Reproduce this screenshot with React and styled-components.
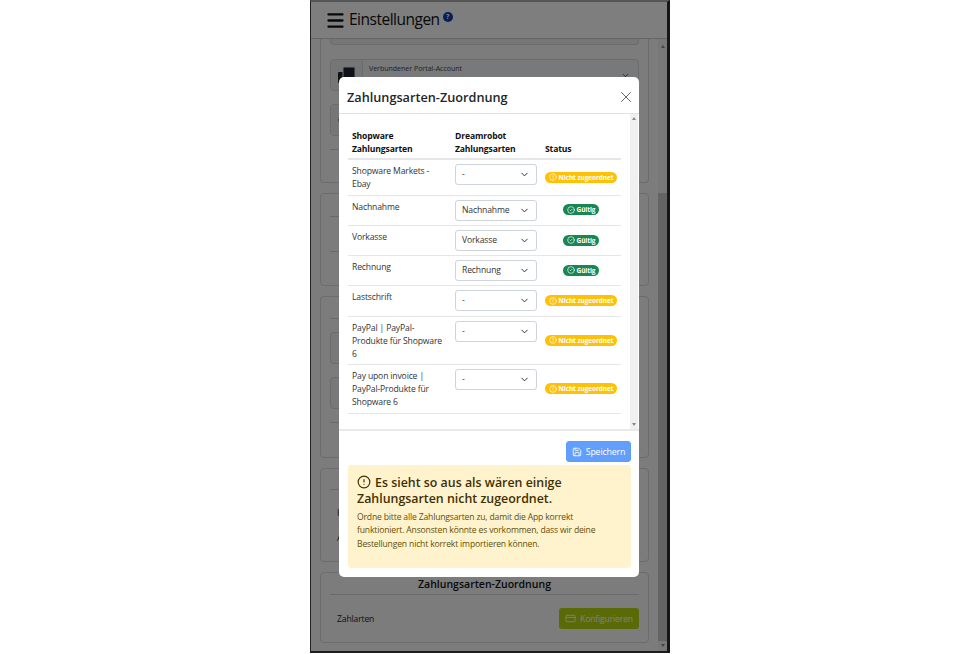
import React from 'react';
import styled, { createGlobalStyle } from 'styled-components';
import { ChevronDown, X, Menu, CircleAlert, CircleCheck, CreditCard, Save } from 'lucide-react';

const Global = createGlobalStyle`
  html, body { margin: 0; padding: 0; background: #fff; }
  body { font-family: "Open Sans", "Noto Sans", sans-serif; color: #212529; }
`;

const Stage = styled.div`
  width: 980px;
  height: 654px;
  display: flex;
  justify-content: center;
  align-items: flex-start;
  overflow: hidden;
`;

const Frame = styled.div`
  position: relative;
  width: 360px;
  height: 653px;
  box-sizing: border-box;
  border-left: 1px solid #222;
  border-right: 3px solid #161616;
  border-top: 2px solid #555;
  border-bottom: 2px solid #1c1c1c;
  background: #fff;
  display: flex;
  flex-direction: column;
  overflow: hidden;
`;

const Overlay = styled.div`
  position: absolute;
  inset: 0;
  background: rgba(0, 0, 0, 0.5);
`;

const Header = styled.header`
  height: 37px;
  flex: none;
  box-sizing: border-box;
  display: flex;
  align-items: center;
  gap: 3px;
  padding-left: 14px;
  border-bottom: 1px solid #ccc;
  background: #fcfcfc;
`;

const Title = styled.h1`
  margin: 0 0 2px;
  font-size: 15.5px;
  letter-spacing: -0.5px;
  font-weight: 400;
  color: #111;
`;

const Help = styled.span`
  width: 10px;
  height: 10px;
  border-radius: 50%;
  background: #0d3bb0;
  color: #fff;
  font-size: 7px;
  font-weight: 700;
  line-height: 10px;
  text-align: center;
  margin-top: -7px;
`;

const Main = styled.div`
  flex: 1;
  display: flex;
  min-height: 0;
`;

const Content = styled.div`
  flex: 1;
  display: flex;
  flex-direction: column;
  gap: 10px;
  padding: 0 9px;
  background: #f8f8f8;
`;

const Rail = styled.div`
  width: 9px;
  flex: none;
  background: #f1f1f1;
  display: flex;
  flex-direction: column;
  align-items: center;
  padding: 6px 0 4px;
  box-sizing: border-box;
`;

const RailSpacer = styled.div`
  height: 145px;
  flex: none;
`;

const Thumb = styled.div`
  flex: 1;
  width: 100%;
  background: #c8c8c8;
  margin-bottom: 3px;
`;

const Card = styled.section`
  height: ${p => p.$h}px;
  flex: none;
  box-sizing: border-box;
  border: 1px solid #d8d8d8;
  border-radius: 4px;
  padding: 0 9px;
  display: flex;
  flex-direction: column;
  border-top: ${p => (p.$open ? 'none' : '1px solid #d8d8d8')};
  border-top-left-radius: ${p => (p.$open ? 0 : 4)}px;
  border-top-right-radius: ${p => (p.$open ? 0 : 4)}px;
`;

const FieldStub = styled.div`
  height: 5px;
  flex: none;
  background: #e9ecef;
  border: 1px solid #d8d8d8;
  border-top: none;
  border-radius: 0 0 4px 4px;
  margin-bottom: 14px;
`;

const Field = styled.div`
  height: 32px;
  flex: none;
  box-sizing: border-box;
  border: 1px solid #d8d8d8;
  border-radius: 4px;
  background: #f1f3f5;
  margin-top: ${p => p.$top || 0}px;
  display: flex;
  align-items: center;
  overflow: hidden;
`;

const Addon = styled.div`
  width: 32px;
  height: 100%;
  flex: none;
  box-sizing: border-box;
  border-right: 1px solid #d8d8d8;
  background: #e9ecef;
  display: flex;
  align-items: center;
  padding-left: 7px;
`;

const FieldLabel = styled.div`
  font-size: 7px;
  color: #444;
  align-self: flex-start;
  padding: 4px 0 0 6px;
  flex: 1;
`;

const Rule = styled.div`
  height: 1px;
  flex: none;
  background: #d4d4d4;
  margin-top: ${p => p.$top}px;
`;

const CardTitle = styled.h3`
  margin: 4px 0 0;
  font-size: 10.5px;
  line-height: 15px;
  text-align: center;
  font-weight: 600;
  color: #111;
`;

const ConfigRow = styled.div`
  display: flex;
  justify-content: space-between;
  align-items: center;
  margin-top: 13px;
  padding-left: 7px;
  font-size: 8.6px;
  letter-spacing: -0.15px;
`;

const ConfigButton = styled.button`
  height: 21px;
  width: 80px;
  border: none;
  border-radius: 3px;
  background: #b5d40f;
  color: #fff;
  font: inherit;
  letter-spacing: inherit;
  display: flex;
  align-items: center;
  justify-content: center;
  gap: 4px;
  padding: 0;
`;

const Stray = styled.div`
  font-size: 9px;
  line-height: 12px;
  padding-left: 7px;
  margin-top: ${p => p.$top}px;
`;

const Modal = styled.div`
  position: absolute;
  left: 28px;
  top: 75px;
  width: 300px;
  height: 500px;
  background: #fff;
  border-radius: 5px;
  display: flex;
  flex-direction: column;
`;

const ModalHead = styled.div`
  height: 37px;
  flex: none;
  box-sizing: border-box;
  border-bottom: 1px solid #dee2e6;
  display: flex;
  align-items: center;
  justify-content: space-between;
  padding: 3px 4px 0 8px;
`;

const ModalTitle = styled.h2`
  margin: 0;
  font-size: 12.7px;
  font-weight: 600;
  color: #212529;
`;

const ModalBody = styled.div`
  height: 317px;
  flex: none;
  display: flex;
  border-bottom: 2px solid #e9e9e9;
  box-sizing: border-box;
`;

const TableWrap = styled.div`
  flex: 1;
  padding: 0 9px;
`;

const Table = styled.table`
  width: 273px;
  table-layout: fixed;
  border-collapse: collapse;
  font-size: 8.6px;
  letter-spacing: -0.15px;
  line-height: 13px;
  color: #333;
  th { font-weight: 700; color: #111; text-align: left; vertical-align: bottom; padding: 16px 4px 2px; }
  td { vertical-align: top; padding: 5px 4px 3.5px; }
  tr { border-bottom: 1px solid #e6e6e6; }
  thead tr { border-bottom: 2px solid #e6e6e6; }
`;

const SelectCell = styled.td`
  && { padding-top: 4px; padding-bottom: 0; }
`;

const BodyRail = styled.div`
  width: 8px;
  flex: none;
  background: #f0f0f0;
  margin-right: 1px;
  display: flex;
  flex-direction: column;
  align-items: center;
  justify-content: space-between;
  padding: 3px 0;
  box-sizing: border-box;
`;

const Arrow = styled.i`
  width: 0;
  height: 0;
  flex: none;
  border-left: 2.5px solid transparent;
  border-right: 2.5px solid transparent;
  ${p => (p.$down ? 'border-top: 3px solid #888;' : 'border-bottom: 3px solid #888;')}
`;

const SelectBox = styled.div`
  width: 82px;
  height: 21px;
  box-sizing: border-box;
  border: 1px solid #ced4da;
  border-radius: 3px;
  display: flex;
  align-items: center;
  justify-content: space-between;
  padding: 0 6px;
  color: #333;
  margin-bottom: 4.25px;
`;

const StatusCell = styled.td`
  && { vertical-align: middle; text-align: center; padding: 2px 0 0; }
`;

const Badge = styled.span`
  display: inline-flex;
  align-items: center;
  gap: 2px;
  height: 11px;
  padding: 0 4px;
  border-radius: 6px;
  font-size: 6.5px;
  letter-spacing: -0.1px;
  font-weight: 700;
  color: #fff;
  background: ${p => (p.$ok ? '#198754' : '#ffc107')};
`;

const ModalFoot = styled.div`
  flex: 1;
  padding: 10px 8px 9px 9px;
  display: flex;
  flex-direction: column;
  gap: 3px;
`;

const SaveButton = styled.button`
  align-self: flex-end;
  width: 65px;
  height: 21px;
  flex: none;
  border: 1px solid #5d9cfa;
  border-radius: 3px;
  background: #629efb;
  color: #fff;
  font: inherit;
  font-size: 8.8px;
  letter-spacing: -0.15px;
  display: flex;
  align-items: center;
  justify-content: center;
  gap: 4px;
  padding: 0;
`;

const Alert = styled.div`
  flex: 1;
  background: #fff3cd;
  border-radius: 3px;
  padding: 10px 9px;
  color: #664d03;
`;

const AlertTitle = styled.h4`
  margin: 0 0 4px;
  font-size: 12.4px;
  line-height: 16px;
  font-weight: 600;
  color: #3f3002;
  svg { vertical-align: -2px; margin-right: 4px; }
`;

const AlertText = styled.p`
  margin: 0;
  font-size: 8.6px;
  letter-spacing: -0.17px;
  line-height: 13.4px;
`;

const rows = [
  { name: 'Shopware Markets - Ebay', value: '-' },
  { name: 'Nachnahme', value: 'Nachnahme', ok: true },
  { name: 'Vorkasse', value: 'Vorkasse', ok: true },
  { name: 'Rechnung', value: 'Rechnung', ok: true },
  { name: 'Lastschrift', value: '-' },
  { name: 'PayPal | PayPal-Produkte für Shopware 6', value: '-' },
  { name: 'Pay upon invoice | PayPal-Produkte für Shopware 6', value: '-' },
];

function PortalLogo() {
  return (
    <svg width="18" height="18" viewBox="0 0 18 18">
      <rect x="0" y="6" width="8" height="11" rx="1" fill="#222" />
      <rect x="5" y="1" width="12" height="12" rx="1" fill="#1c2230" stroke="#ddd" strokeWidth="1" />
    </svg>
  );
}

export default function App() {
  return (
    <Stage>
      <Global />
      <Frame>
        <Header>
          <Menu size={21} strokeWidth={2.6} color="#111" />
          <Title>Einstellungen</Title>
          <Help>?</Help>
        </Header>
        <Main>
          <Content>
            <Card $h={144} $open>
              <FieldStub />
              <Field>
                <Addon>
                  <PortalLogo />
                </Addon>
                <FieldLabel>Verbundener Portal-Account</FieldLabel>
                <ChevronDown size={9} style={{ marginRight: 8 }} />
              </Field>
              <Field $top={13}>
                <Addon>
                  <CircleAlert size={12} color="#222" />
                </Addon>
              </Field>
              <Rule $top={13} />
            </Card>
            <Card $h={93}>
              <Rule $top={22} />
              <Rule $top={34} />
            </Card>
            <Card $h={162}>
              <Rule $top={21} />
              <Field $top={13} />
              <Field $top={13} />
              <Rule $top={13} />
            </Card>
            <Card $h={94}>
              <Rule $top={20} />
              <Stray $top={17}>H</Stray>
              <Stray $top={13}>A</Stray>
            </Card>
            <Card $h={71}>
              <CardTitle>Zahlungsarten-Zuordnung</CardTitle>
              <Rule $top={2} />
              <ConfigRow>
                Zahlarten
                <ConfigButton>
                  <CreditCard size={11} />
                  Konfigurieren
                </ConfigButton>
              </ConfigRow>
            </Card>
          </Content>
          <Rail>
            <Arrow />
            <RailSpacer />
            <Thumb />
            <Arrow $down />
          </Rail>
        </Main>
        <Overlay />
        <Modal>
          <ModalHead>
            <ModalTitle>Zahlungsarten-Zuordnung</ModalTitle>
            <X size={18} strokeWidth={1} color="#333" />
          </ModalHead>
          <ModalBody>
            <TableWrap>
              <Table>
                <colgroup>
                  <col style={{ width: 103 }} />
                  <col style={{ width: 90 }} />
                  <col />
                </colgroup>
                <thead>
                  <tr>
                    <th>Shopware Zahlungsarten</th>
                    <th>Dreamrobot Zahlungsarten</th>
                    <th>Status</th>
                  </tr>
                </thead>
                <tbody>
                  {rows.map(r => (
                    <tr key={r.name}>
                      <td>{r.name}</td>
                      <SelectCell>
                        <SelectBox>
                          {r.value}
                          <ChevronDown size={11} color="#222" />
                        </SelectBox>
                      </SelectCell>
                      <StatusCell>
                        <Badge $ok={r.ok}>
                          {r.ok ? <CircleCheck size={8} /> : <CircleAlert size={8} />}
                          {r.ok ? 'Gültig' : 'Nicht zugeordnet'}
                        </Badge>
                      </StatusCell>
                    </tr>
                  ))}
                </tbody>
              </Table>
            </TableWrap>
            <BodyRail>
              <Arrow />
              <Arrow $down />
            </BodyRail>
          </ModalBody>
          <ModalFoot>
            <SaveButton>
              <Save size={10} />
              Speichern
            </SaveButton>
            <Alert>
              <AlertTitle>
                <CircleAlert size={14} />
                Es sieht so aus als wären einige Zahlungsarten nicht zugeordnet.
              </AlertTitle>
              <AlertText>
                Ordne bitte alle Zahlungsarten zu, damit die App korrekt funktioniert. Ansonsten könnte es vorkommen, dass wir deine Bestellungen nicht korrekt importieren können.
              </AlertText>
            </Alert>
          </ModalFoot>
        </Modal>
      </Frame>
    </Stage>
  );
}
